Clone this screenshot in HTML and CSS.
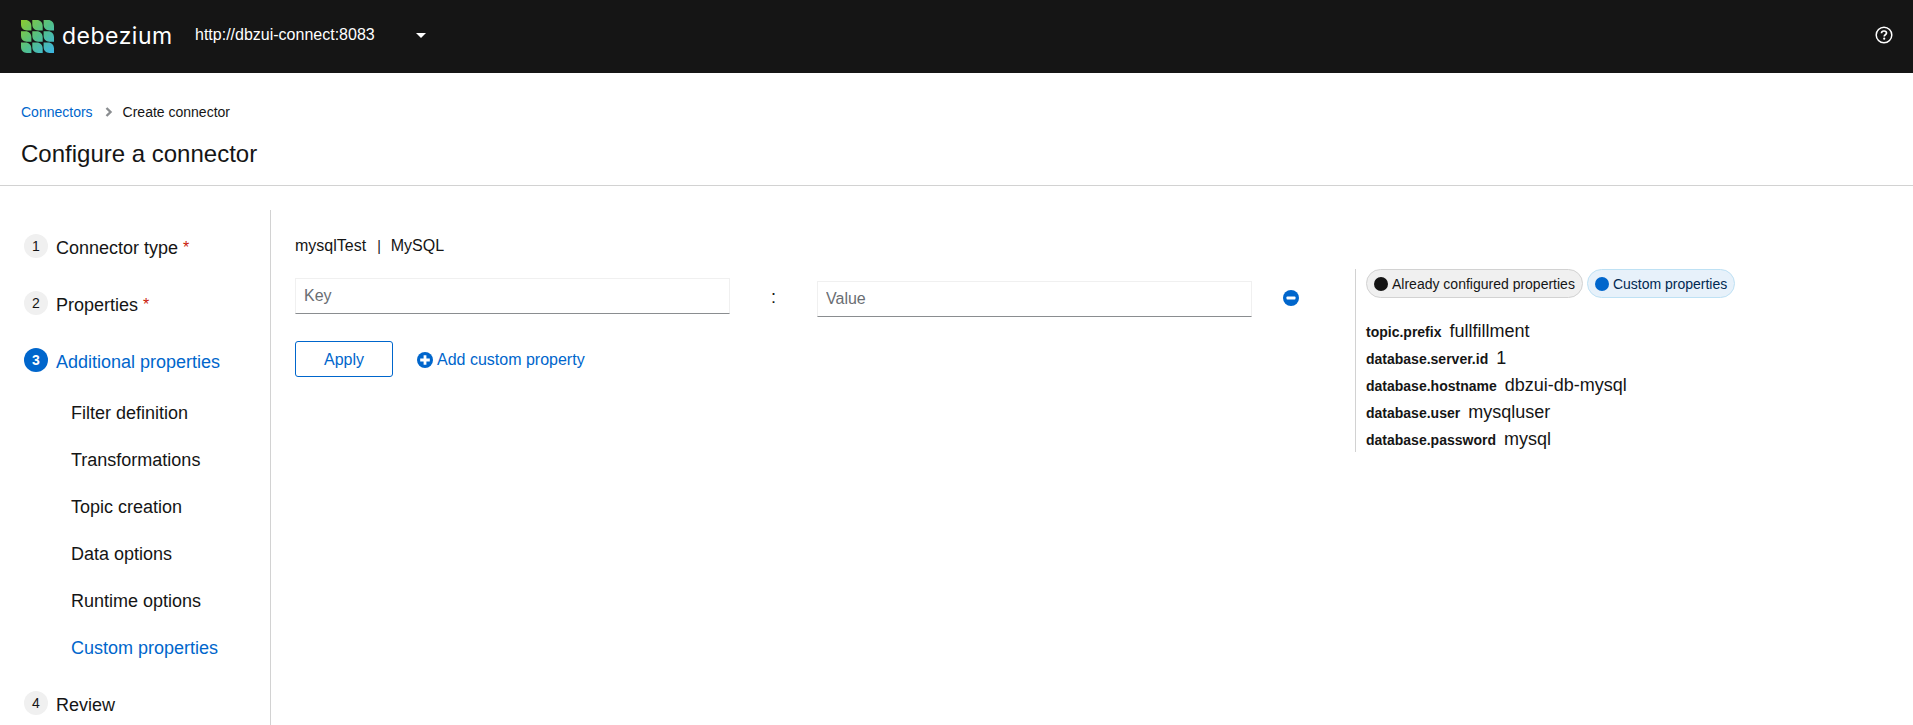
FILE: index.html
```html
<!DOCTYPE html>
<html lang="en">
<head>
    <meta charset="UTF-8">
    <title>Configure a connector</title>

    <link rel="stylesheet" href="styles.css">

</head>
<body>

<header class="masthead">
    <div class="brand">
        <svg class="brand-mark" width="33" height="33" viewBox="0 0 33 33">
            <defs>
                <linearGradient id="leaf" gradientUnits="userSpaceOnUse" x1="0" y1="0" x2="33" y2="33">
                    <stop offset="0" stop-color="#8ccb2e"/>
                    <stop offset="0.5" stop-color="#52c088"/>
                    <stop offset="1" stop-color="#3cb4e4"/>
                </linearGradient>
            </defs>
            <path fill="url(#leaf)" d="M0 0h4.500c3.500 0 5.900 2.400 5.900 5.900v4.500h-4.500c-3.500 0-5.900-2.400-5.900-5.900z
                M11.300 0h4.500c3.500 0 5.900 2.400 5.900 5.900v4.500h-4.500c-3.500 0-5.900-2.400-5.900-5.900z
                M22.600 0h4.500c3.500 0 5.900 2.400 5.900 5.900v4.500h-4.500c-3.500 0-5.900-2.400-5.900-5.900z
                M0 11.300h4.500c3.500 0 5.900 2.400 5.900 5.900v4.500h-4.500c-3.500 0-5.900-2.400-5.900-5.900z
                M11.300 11.300h4.500c3.500 0 5.900 2.400 5.900 5.900v4.500h-4.500c-3.500 0-5.900-2.400-5.900-5.900z
                M22.600 11.300h4.500c3.500 0 5.900 2.400 5.900 5.900v4.500h-4.500c-3.500 0-5.900-2.400-5.900-5.900z
                M0 22.600h4.500c3.500 0 5.900 2.400 5.900 5.900v4.500h-4.500c-3.500 0-5.900-2.400-5.900-5.900z
                M11.300 22.600h4.500c3.500 0 5.900 2.400 5.900 5.900v4.500h-4.500c-3.500 0-5.900-2.400-5.900-5.900z
                M22.600 22.600h4.500c3.500 0 5.900 2.400 5.900 5.900v4.500h-4.500c-3.500 0-5.900-2.400-5.900-5.900z"/>
        </svg>
        <span class="brand-name">debezium</span>
    </div>
    <div class="cluster">
        <span class="cluster-url">http://dbzui-connect:8083</span>
        <span class="caret"></span>
    </div>
    <svg class="help" width="18" height="18" viewBox="0 0 18 18">
        <circle cx="9" cy="9" r="7.800" fill="none" stroke="#fff" stroke-width="1.500"/>
        <path d="M6.500 7.200C6.500 5.800 7.600 5 9 5C10.500 5 11.500 5.900 11.500 7.100C11.500 8.700 9.200 8.800 9.200 10.400" fill="none" stroke="#fff" stroke-width="1.700"/>
        <circle cx="9.200" cy="12.700" r="1.100" fill="#fff"/>
    </svg>
</header>

<section class="page-head">
    <nav class="crumbs">
        <a class="link">Connectors</a>
        <svg class="crumb-sep" width="8" height="10" viewBox="0 0 8 10">
            <path d="M1.500 1L5.500 5L1.500 9" fill="none" stroke="#8a8d90" stroke-width="2.400"/>
        </svg>
        <span>Create connector</span>
    </nav>
    <h1 class="page-title">Configure a connector</h1>
</section>

<div class="wizard">
    <aside class="steps">
        <div class="step"><span class="step-num">1</span>Connector type<span class="req">*</span></div>
        <div class="step"><span class="step-num">2</span>Properties<span class="req">*</span></div>
        <div class="step current"><span class="step-num">3</span>Additional properties</div>
        <ul class="substeps">
            <li>Filter definition</li>
            <li>Transformations</li>
            <li>Topic creation</li>
            <li>Data options</li>
            <li>Runtime options</li>
            <li class="current">Custom properties</li>
        </ul>
        <div class="step"><span class="step-num">4</span>Review</div>
    </aside>

    <main class="content">
        <div class="editor">
            <p class="conn-name">mysqlTest<span class="conn-bar">|</span>MySQL</p>
            <div class="prop-row">
                <input class="field key" placeholder="Key">
                <span class="colon">:</span>
                <input class="field value" placeholder="Value">
                <svg class="remove" width="16" height="16" viewBox="0 0 16 16">
                    <circle cx="8" cy="8" r="8" fill="#0066cc"/>
                    <rect x="3.500" y="6.500" width="9" height="3" rx="0.800" fill="#fff"/>
                </svg>
            </div>
            <div class="actions">
                <button class="btn-apply">Apply</button>
                <a class="add-prop">
                    <svg width="16" height="16" viewBox="0 0 16 16">
                        <circle cx="8" cy="8" r="8" fill="#0066cc"/>
                        <path d="M6.600 3.200H9.400V6.600H12.800V9.400H9.400V12.800H6.600V9.400H3.200V6.600H6.600Z" fill="#fff"/>
                    </svg>
                    Add custom property
                </a>
            </div>
        </div>

        <div class="summary">
            <div class="legend">
                <span class="chip grey"><i class="dot"></i>Already configured properties</span>
                <span class="chip blue"><i class="dot"></i>Custom properties</span>
            </div>
            <dl class="props">
                <div><dt>topic.prefix</dt><dd>fullfillment</dd></div>
                <div><dt>database.server.id</dt><dd>1</dd></div>
                <div><dt>database.hostname</dt><dd>dbzui-db-mysql</dd></div>
                <div><dt>database.user</dt><dd>mysqluser</dd></div>
                <div><dt>database.password</dt><dd>mysql</dd></div>
            </dl>
        </div>
    </main>
</div>

</body>
</html>
```

FILE: styles.css
```css
html, body {
    height: 100%;
}

body {
    margin: 0;
    height: 725px;
    overflow: hidden;
    background: #fff;
    color: #151515;
    font-family: "Liberation Sans", Arial, sans-serif;
    font-size: 16px;
}

.masthead {
    display: flex;
    align-items: center;
    height: 73px;
    padding: 0 20px 0 21px;
    background: #151515;
    color: #fff;
}

.brand {
    display: flex;
    align-items: center;
    width: 174px;
    margin-top: -1px;
}

.brand-mark {
    margin-right: 8px;
}

.brand-name {
    font-family: Inter, sans-serif;
    font-size: 23px;
    letter-spacing: 0.5px;
    line-height: 30px;
}

.cluster {
    display: flex;
    align-items: center;
    flex: 1;
    margin-top: -3px;
}

.cluster-url {
    width: 221px;
}

.caret {
    width: 0;
    height: 0;
    border-left: 5px solid transparent;
    border-right: 5px solid transparent;
    border-top: 5px solid #fff;
}

.help {
    margin-top: -3px;
}

.page-head {
    height: 112px;
    padding: 0 21px;
    border-bottom: 1px solid #d2d2d2;
}

.crumbs {
    display: flex;
    align-items: center;
    height: 20px;
    padding-top: 29px;
    font-size: 14px;
}

.link {
    color: #0066cc;
}

.crumb-sep {
    margin: 0 10px 0 12px;
}

.page-title {
    margin: 16px 0 0;
    font-size: 24px;
    font-weight: 400;
    line-height: 32px;
}

.wizard {
    display: flex;
    padding-top: 24px;
    height: 515px;
}

.steps {
    width: 246px;
    padding: 24px 0 0 24px;
    border-right: 1px solid #d2d2d2;
    font-size: 18px;
}

.step {
    display: flex;
    align-items: flex-start;
    height: 24px;
    margin-bottom: 33px;
    line-height: 28px;
}

.step-num {
    display: flex;
    align-items: center;
    justify-content: center;
    width: 24px;
    height: 24px;
    margin-right: 8px;
    border-radius: 50%;
    background: #f0f0f0;
    font-size: 14px;
}

.step.current {
    margin-bottom: 0;
    color: #0066cc;
}

.step.current .step-num {
    background: #0066cc;
    color: #fff;
    font-weight: 700;
}

.req {
    margin-left: 5px;
    font-size: 16px;
    color: #c9190b;
}

.substeps {
    margin: 18px 0 19px;
    padding: 0 0 0 47px;
    list-style: none;
}

.substeps li {
    height: 47px;
    line-height: 47px;
}

.substeps li.current {
    color: #0066cc;
}

.content {
    display: flex;
    flex: 1;
    padding: 23px 0 0 24px;
}

.editor {
    width: 1060px;
}

.conn-name {
    margin: 0;
    height: 24px;
    line-height: 26px;
}

.conn-bar {
    margin: 0 10px 0 11px;
    font-size: 14px;
}

.prop-row {
    display: flex;
    align-items: center;
    margin-top: 21px;
    height: 39px;
}

.field {
    box-sizing: border-box;
    width: 435px;
    height: 36px;
    padding: 0 8px;
    border: 1px solid #f0f0f0;
    border-bottom-color: #8a8d90;
    border-radius: 0;
    outline: 0;
    font: inherit;
    color: #151515;
}

.field::placeholder {
    color: #6a6e73;
    opacity: 1;
}

.field.key {
    align-self: flex-start;
}

.field.value {
    align-self: flex-end;
}

.colon {
    width: 87px;
    text-align: center;
    font-size: 18px;
}

.remove {
    margin-left: 31px;
}

.actions {
    display: flex;
    align-items: center;
    margin-top: 24px;
}

.btn-apply {
    width: 98px;
    height: 36px;
    padding: 2px 0 0;
    border: 1px solid #0066cc;
    border-radius: 3px;
    background: #fff;
    color: #0066cc;
    font: inherit;
}

.add-prop {
    display: flex;
    align-items: center;
    gap: 4px;
    margin: 1px 0 0 24px;
    color: #0066cc;
}

.summary {
    align-self: flex-start;
    margin-top: 36px;
    padding-left: 10px;
    height: 183px;
    border-left: 1px solid #d2d2d2;
}

.legend {
    display: flex;
    gap: 4px;
}

.chip {
    display: flex;
    align-items: center;
    box-sizing: border-box;
    height: 29px;
    padding: 0 7px;
    border: 1px solid #d2d2d2;
    border-radius: 15px;
    background: #f0f0f0;
    font-size: 14px;
    color: #151515;
}

.chip .dot {
    width: 14px;
    height: 14px;
    margin-right: 4px;
    border-radius: 50%;
    background: #151515;
}

.chip.blue {
    border-color: #bee1f4;
    background: #e7f1fa;
    color: #002952;
}

.chip.blue .dot {
    background: #0066cc;
}

.props {
    margin: 20px 0 0;
}

.props div {
    display: flex;
    align-items: baseline;
    height: 27px;
    line-height: 27px;
}

dt {
    font-size: 14px;
    font-weight: 700;
}

dd {
    margin: 0 0 0 8px;
    font-size: 18px;
}
```
